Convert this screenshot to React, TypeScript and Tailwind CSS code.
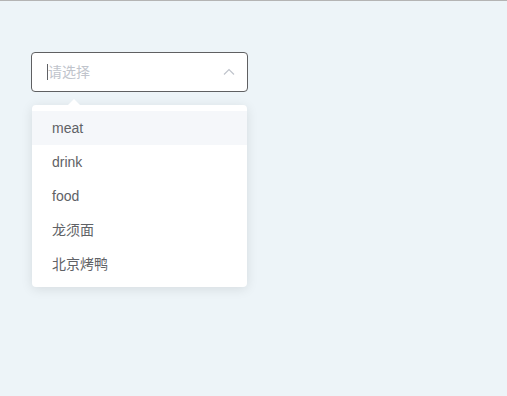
const options = ["meat", "drink", "food", "龙须面", "北京烤鸭"];

export default function App() {
  return (
    <div
      className="h-[396px] w-full bg-[#edf4f8] border-t border-[#b4b4b4] text-[14px]"
      style={{ fontFamily: '"Liberation Sans", "Noto Sans CJK SC", sans-serif' }}
    >
      <div className="pt-[51px] pl-[31px]">
        <div className="relative w-[217px]">
          <div className="flex h-[40px] items-center rounded-[4px] border border-[#5f6062] bg-white pl-[15px] pr-[10px]">
            <span className="h-[16px] w-px bg-[#606266]" />
            <span className="flex-1 text-[#c0c4cc]">请选择</span>
            <svg width="12" height="8" viewBox="0 0 12 8" className="mr-[2px]">
              <path d="M1 6.5 L6 1.5 L11 6.5" fill="none" stroke="#c0c4cc" strokeWidth="1.2" />
            </svg>
          </div>

          <div className="relative mt-[13px] ml-px w-[215px] rounded-[4px] bg-white py-[6px] shadow-[0_2px_12px_0_rgba(0,0,0,0.1)]">
            <div className="absolute -top-[6px] left-[36px] h-0 w-0 border-x-[6px] border-b-[6px] border-x-transparent border-b-white" />
            {options.map((o, i) => (
              <div
                key={o}
                className={`flex h-[34px] items-center px-[20px] text-[#606266] ${i === 0 ? "bg-[#f5f7fa]" : ""}`}
              >
                {o}
              </div>
            ))}
          </div>
        </div>
      </div>
    </div>
  );
}
